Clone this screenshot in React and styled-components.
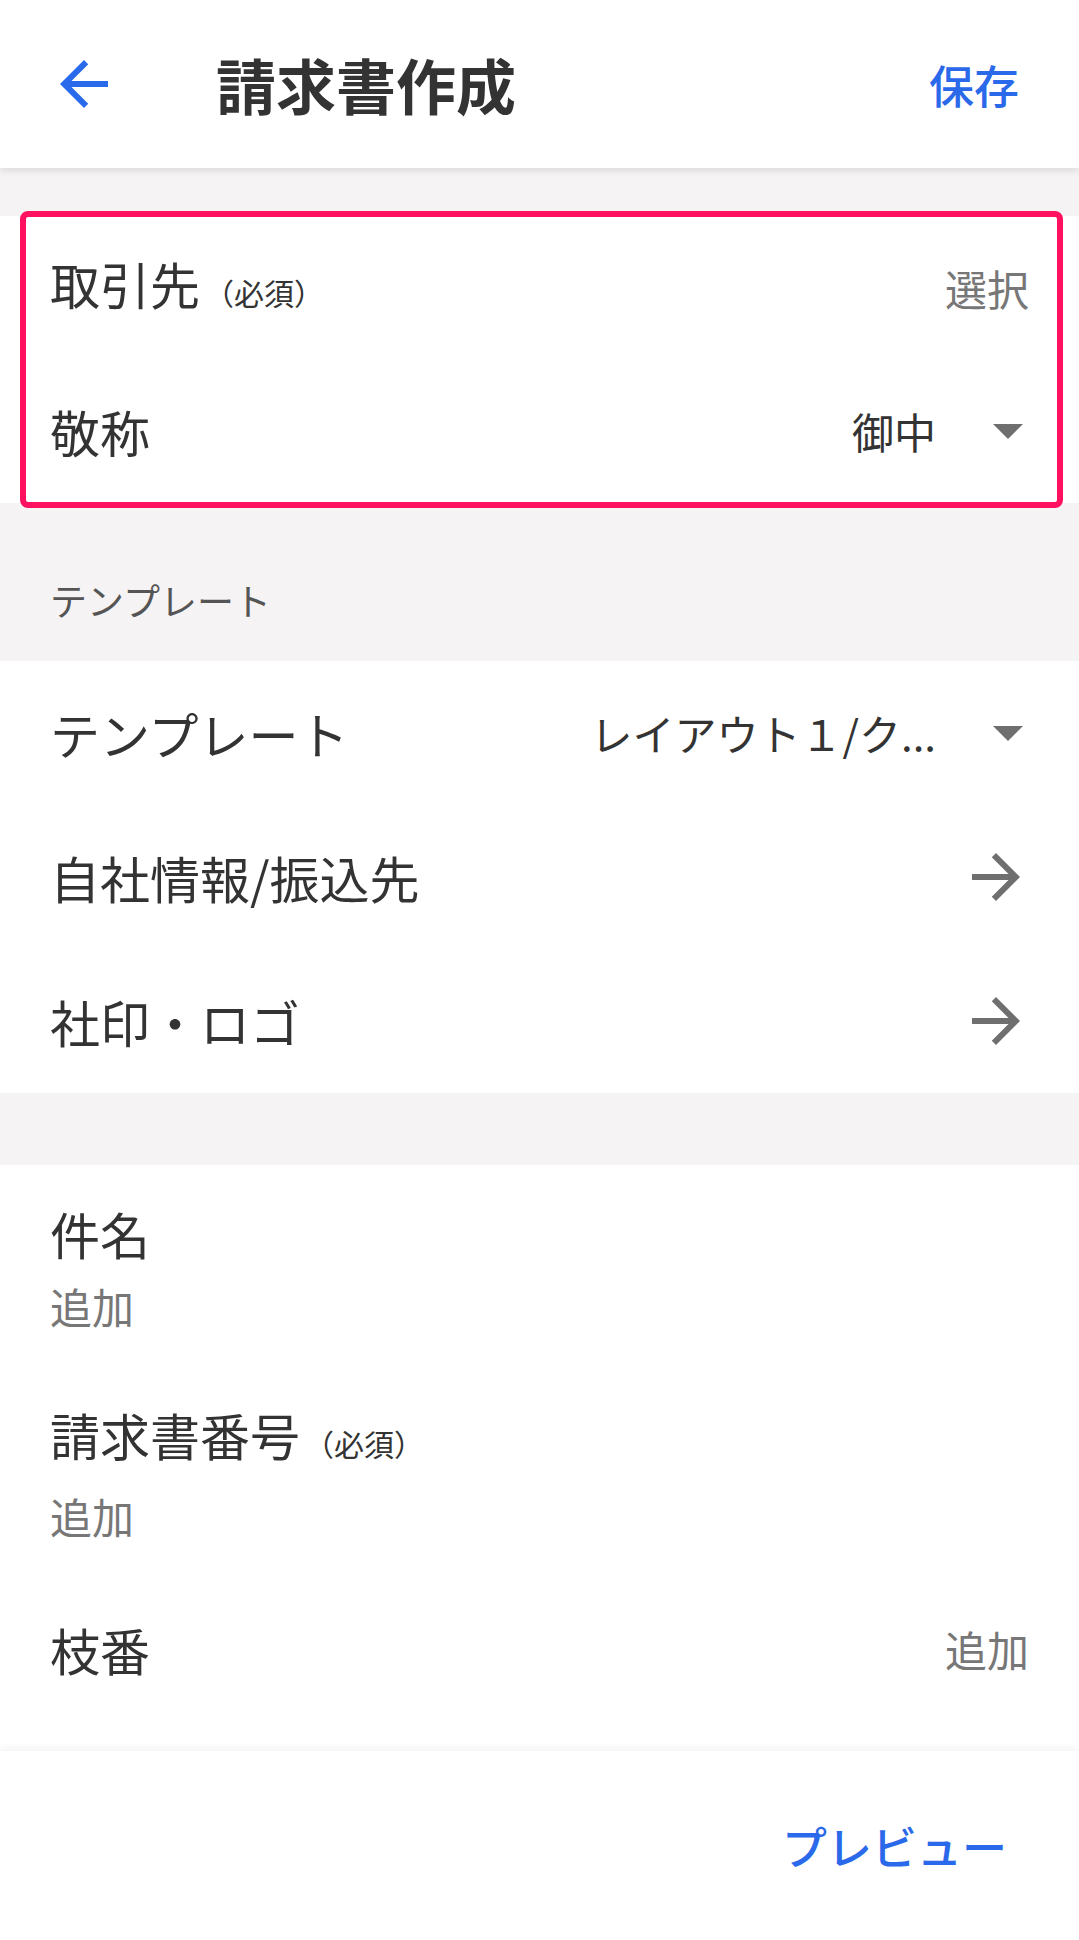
import React from "react";
import styled, { createGlobalStyle } from "styled-components";

const BLUE = "#2a69e9";
const TEXT = "#333333";
const SUB = "#777777";
const ICON = "#6f6f6f";
const BG = "#f5f3f4";

const GlobalStyle = createGlobalStyle`
  html, body {
    margin: 0;
    padding: 0;
    background: ${BG};
  }
  body {
    font-family: "Noto Sans CJK JP", "Noto Sans", sans-serif;
    color: ${TEXT};
    -webkit-font-smoothing: antialiased;
  }
`;

const Page = styled.div`
  width: 1079px;
  height: 1940px;
  display: flex;
  flex-direction: column;
  background: ${BG};
  overflow: hidden;
`;

const AppBar = styled.header`
  position: relative;
  z-index: 2;
  height: 168px;
  flex-shrink: 0;
  display: flex;
  align-items: center;
  padding: 0 60px;
  background: #fff;
  box-shadow: 0 2px 8px rgba(0, 0, 0, 0.12);
`;

const IconButton = styled.button`
  display: flex;
  align-items: center;
  justify-content: center;
  padding: 0;
  border: 0;
  background: none;
  color: ${props => props.$color || ICON};
`;

const Title = styled.h1`
  margin: 0 0 0 108px;
  font-size: 60px;
  font-weight: 700;
  line-height: 1;
  color: ${TEXT};
`;

const TextAction = styled.button`
  margin-left: auto;
  padding: 0;
  border: 0;
  background: none;
  font-family: inherit;
  font-size: 45px;
  font-weight: 500;
  color: ${BLUE};
`;

const Section = styled.section`
  position: relative;
  background: #fff;
  margin-top: ${props => props.$gap || 0}px;
  flex-shrink: 0;

  ${props => props.$highlight && `
    &::after {
      content: "";
      position: absolute;
      top: -5px;
      bottom: -5px;
      left: 20px;
      right: 16px;
      border: 6px solid #ff1160;
      border-radius: 8px;
      pointer-events: none;
    }
  `}
`;

const GrowSection = styled(Section)`
  flex: 1;
`;

const GroupLabel = styled.div`
  height: 158px;
  box-sizing: border-box;
  padding: 72px 50px 0;
  font-size: 37px;
  line-height: 50px;
  color: #555;
  flex-shrink: 0;
`;

const Row = styled.div`
  height: ${props => props.$height || 144}px;
  box-sizing: border-box;
  display: flex;
  align-items: center;
  padding: 0 50px;
`;

const Label = styled.div`
  display: flex;
  align-items: baseline;
  font-size: 50px;
  line-height: 60px;
  color: ${TEXT};
  white-space: nowrap;
`;

const Required = styled.span`
  margin-left: 4px;
  font-size: 30px;
  color: ${TEXT};
`;

const Value = styled.div`
  margin-left: auto;
  font-size: 42px;
  line-height: 56px;
  color: ${props => (props.$dark ? TEXT : SUB)};
  white-space: nowrap;
`;

const Stack = styled.div`
  display: flex;
  flex-direction: column;
  gap: 15px;
`;

const SubValue = styled.div`
  font-size: 42px;
  line-height: 56px;
  color: ${SUB};
`;

const Caret = styled.svg`
  margin-left: 57px;
  margin-right: 6px;
  flex-shrink: 0;
`;

const Chevron = styled.svg`
  margin-left: auto;
  margin-right: 9px;
  flex-shrink: 0;
`;

const BottomBar = styled.footer`
  position: relative;
  z-index: 2;
  height: 189px;
  flex-shrink: 0;
  display: flex;
  align-items: center;
  justify-content: flex-end;
  padding: 0 72px;
  background: #fff;
  box-shadow: 0 -2px 8px rgba(0, 0, 0, 0.06);
`;

const BackArrow = () => (
  <svg width="48" height="48" viewBox="4 4 16 16" fill="currentColor">
    <path d="M20 11H7.83l5.59-5.59L12 4l-8 8 8 8 1.41-1.41L7.83 13H20v-2z" />
  </svg>
);

const DropDown = () => (
  <Caret width="30" height="15" viewBox="7 10 10 5" fill={ICON}>
    <path d="M7 10l5 5 5-5z" />
  </Caret>
);

const Forward = () => (
  <Chevron width="48" height="48" viewBox="4 4 16 16" fill={ICON}>
    <path d="M12 4l-1.41 1.41L16.17 11H4v2h12.17l-5.58 5.59L12 20l8-8z" />
  </Chevron>
);

const App = () => (
  <Page>
    <GlobalStyle />
    <AppBar>
      <IconButton $color={BLUE} aria-label="戻る">
        <BackArrow />
      </IconButton>
      <Title>請求書作成</Title>
      <TextAction>保存</TextAction>
    </AppBar>

    <Section $gap={48} $highlight>
      <Row $height={143}>
        <Label>
          取引先<Required>（必須）</Required>
        </Label>
        <Value>選択</Value>
      </Row>
      <Row $height={144}>
        <Label>敬称</Label>
        <Value $dark>御中</Value>
        <DropDown />
      </Row>
    </Section>

    <GroupLabel>テンプレート</GroupLabel>

    <Section>
      <Row>
        <Label>テンプレート</Label>
        <Value $dark>レイアウト１/ク...</Value>
        <DropDown />
      </Row>
      <Row>
        <Label>自社情報/振込先</Label>
        <Forward />
      </Row>
      <Row>
        <Label>社印・ロゴ</Label>
        <Forward />
      </Row>
    </Section>

    <GrowSection $gap={72}>
      <Row $height={206}>
        <Stack>
          <Label>件名</Label>
          <SubValue>追加</SubValue>
        </Stack>
      </Row>
      <Row $height={206}>
        <Stack>
          <Label>
            請求書番号<Required>（必須）</Required>
          </Label>
          <SubValue>追加</SubValue>
        </Stack>
      </Row>
      <Row>
        <Label>枝番</Label>
        <Value>追加</Value>
      </Row>
    </GrowSection>

    <BottomBar>
      <TextAction>プレビュー</TextAction>
    </BottomBar>
  </Page>
);

export default App;
